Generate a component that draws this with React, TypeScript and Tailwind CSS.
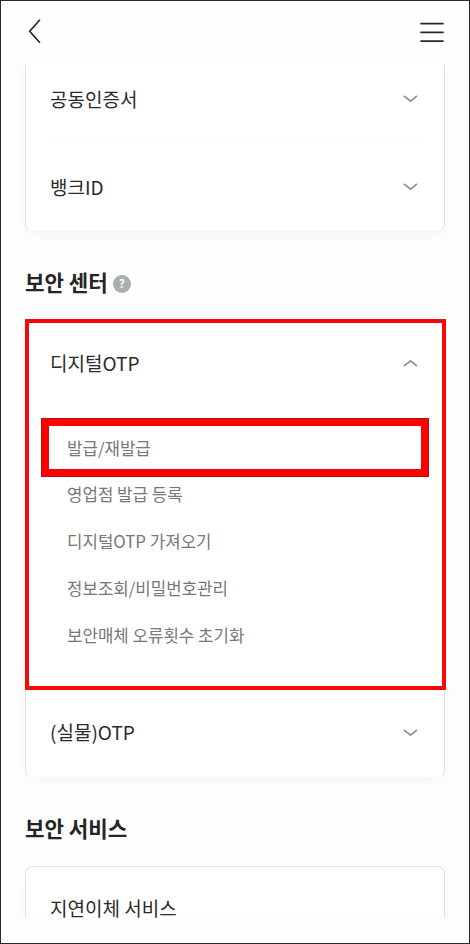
import React from "react";

const card =
  "relative mx-6 rounded-lg border border-[#e2e2e2] border-b-[#f7f7f7] bg-white shadow-[0_4px_18px_rgba(0,0,0,0.035)]";

function Chevron({ up = false }: { up?: boolean }) {
  return (
    <svg
      width="16"
      height="10"
      viewBox="0 0 16 10"
      fill="none"
      stroke="#8f9192"
      strokeWidth="1.7"
    >
      <path d={up ? "M2 8L8.5 2.8L15 8" : "M2 2L8.5 7.2L15 2"} />
    </svg>
  );
}

function Row({ label, up }: { label: string; up?: boolean }) {
  return (
    <div className="flex h-[87px] items-center justify-between pr-[26px] pb-[2px] pl-6">
      <span className="text-[19px] leading-7 text-[#2a2a2a]">{label}</span>
      <span className="pt-px">
        <Chevron up={up} />
      </span>
    </div>
  );
}

function Heading({ children }: { children: React.ReactNode }) {
  return (
    <h2 className="flex items-center px-6 text-[21.2px] leading-8 font-bold text-[#252525]">
      {children}
    </h2>
  );
}

const items = [
  "영업점 발급 등록",
  "디지털OTP 가져오기",
  "정보조회/비밀번호관리",
  "보안매체 오류횟수 초기화",
];

export default function App() {
  return (
    <div className="flex h-[944px] w-[470px] flex-col overflow-hidden border border-[#29292b] bg-[#fefefe] font-['Noto_Sans_CJK_KR',sans-serif]">
      <header className="flex h-16 shrink-0 items-start justify-between pt-[18px] pr-[25px] pl-[27px]">
        <svg width="14" height="26" viewBox="0 0 14 26" fill="none" stroke="#29292b" strokeWidth="1.7">
          <path d="M11.9 0.8L1.7 12.3L11.9 23.8" />
        </svg>
        <svg className="mt-[3px]" width="24" height="22" viewBox="0 0 24 22" stroke="#29292b" strokeWidth="1.7" strokeLinecap="round">
          <path d="M1 1.7H23M1 10.4H23M1 19.1H23" />
        </svg>
      </header>

      <main className="h-[853px] shrink-0 overflow-hidden">
        <section className={`${card} -mt-[10px]`}>
          <Row label="공동인증서" />
          <div className="mr-[26px] ml-[25px] h-px bg-[#fafafa]" />
          <Row label="뱅크ID" />
        </section>

        <div className="mt-[34px]">
          <Heading>
            보안 센터
            <span className="mt-[3px] ml-[5px] flex size-[18px] items-center justify-center rounded-full bg-[#a7afb1] text-[11px] leading-none font-bold text-white">
              ?
            </span>
          </Heading>
        </div>

        <section className={`${card} mt-[21px]`}>
          <Row label="디지털OTP" up />
          <div className="mt-[11px] mr-[15px] ml-[15px] flex h-[59px] items-center border-8 border-[#fe0000] pt-[2px] pl-[18px] text-[16.8px] text-[#777] outline-1 -outline-offset-1 outline-[#b51212]">
            발급/재발급
          </div>
          <ul className="-mt-[5.6px] ml-[41px] text-[16.8px] text-[#777]">
            {items.map((item) => (
              <li key={item} className="flex h-[46.8px] items-center">
                {item}
              </li>
            ))}
          </ul>
          <div className="mt-[31px]">
            <Row label="(실물)OTP" />
          </div>
          <div className="pointer-events-none absolute -top-px -right-[2px] -left-px h-[371px] border-4 border-[#f30b0b]" />
        </section>

        <div className="mt-[34px]">
          <Heading>보안 서비스</Heading>
        </div>

        <section className={`${card} mt-[22px] h-24 pt-[31px] pl-6`}>
          <span className="block text-[19px] leading-5 text-[#2a2a2a]">지연이체 서비스</span>
        </section>
      </main>
    </div>
  );
}
